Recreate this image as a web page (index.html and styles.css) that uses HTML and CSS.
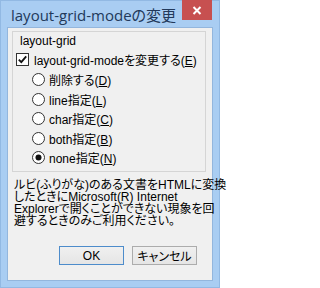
FILE: index.html
```html
<!DOCTYPE html>
<html lang="ja">
<head>
<meta charset="utf-8">
<link rel="stylesheet" href="styles.css">
</head>
<body>
<div class="window">
  <div class="titlebar">
    <div class="title">layout-grid-modeの変更</div>
    <div class="close">
      <svg width="30" height="20" viewBox="0 0 30 20"><path d="M11.5 7 L18.5 14 M18.5 7 L11.5 14" stroke="#fff" stroke-width="2" fill="none"/></svg>
    </div>
  </div>
  <div class="client">
    <div class="group">
      <div class="legend">layout-grid</div>
      <label class="row check-row">
        <svg class="box" width="13" height="13" viewBox="0 0 13 13"><rect x="0.5" y="0.5" width="12" height="12" fill="#fff" stroke="#333"/><path d="M2.8 6.6 L5.3 9.2 L10.2 3.4" stroke="#111" stroke-width="1.8" fill="none"/></svg>
        <span>layout-grid-modeを変更する(<u>E</u>)</span>
      </label>
      <div class="radios">
        <label class="row radio-row">
          <svg class="box" width="13" height="13" viewBox="0 0 13 13"><circle cx="6.5" cy="6.5" r="6" fill="#fff" stroke="#333"/></svg>
          <span>削除する(<u>D</u>)</span>
        </label>
        <label class="row radio-row">
          <svg class="box" width="13" height="13" viewBox="0 0 13 13"><circle cx="6.5" cy="6.5" r="6" fill="#fff" stroke="#333"/></svg>
          <span>line指定(<u>L</u>)</span>
        </label>
        <label class="row radio-row">
          <svg class="box" width="13" height="13" viewBox="0 0 13 13"><circle cx="6.5" cy="6.5" r="6" fill="#fff" stroke="#333"/></svg>
          <span>char指定(<u>C</u>)</span>
        </label>
        <label class="row radio-row">
          <svg class="box" width="13" height="13" viewBox="0 0 13 13"><circle cx="6.5" cy="6.5" r="6" fill="#fff" stroke="#333"/></svg>
          <span>both指定(<u>B</u>)</span>
        </label>
        <label class="row radio-row">
          <svg class="box" width="13" height="13" viewBox="0 0 13 13"><circle cx="6.5" cy="6.5" r="6" fill="#fff" stroke="#333"/><circle cx="6.5" cy="6.5" r="3" fill="#111"/></svg>
          <span>none指定(<u>N</u>)</span>
        </label>
      </div>
    </div>
    <p class="note">ルビ(ふりがな)のある文書をHTMLに変換<br>したときにMicrosoft(R) Internet<br>Explorerで開くことができない現象を回<br>避するときのみご利用ください。</p>
    <div class="buttons">
      <button class="btn default">OK</button>
      <button class="btn">キャンセル</button>
    </div>
  </div>
</div>
</body>
</html>
```

FILE: styles.css
```css
html, body {
  margin: 0;
  padding: 0;
}

.window {
  width: 220px;
  height: 288px;
  box-sizing: border-box;
  background: #a9cdf2;
  box-shadow: inset 0 0 0 1px #92b9e3;
  display: flex;
  flex-direction: column;
  font-family: "Liberation Sans", "Noto Sans CJK JP", sans-serif;
  font-size: 12px;
  font-feature-settings: "palt" 1;
  color: #000;
}

.titlebar {
  height: 28px;
  display: flex;
  justify-content: space-between;
  align-items: flex-start;
  flex: none;
}

.title {
  font-family: "Open Sans", "Noto Sans CJK JP", sans-serif;
  font-size: 15px;
  line-height: 20px;
  padding: 5px 0 0 11px;
  color: #22395a;
  white-space: nowrap;
}

.close {
  width: 30px;
  height: 20px;
  margin-right: 8px;
  background: #c75050;
  display: flex;
}

.client {
  flex: 1;
  margin: 0 8px 8px;
  background: #f0f0f0;
  box-shadow: 0 0 0 1px #93b6dd;
  display: flex;
  flex-direction: column;
}

.group {
  margin: 3px 6px 0 4px;
  height: 141px;
  box-sizing: border-box;
  border: 1px solid #d5d5d5;
  padding-top: 2px;
}

.legend {
  height: 15px;
  line-height: 14px;
  padding-left: 7px;
}

.row {
  display: flex;
  align-items: center;
  white-space: nowrap;
}

.row .box {
  flex: none;
}

.check-row {
  height: 20px;
  padding-left: 3px;
}

.check-row .box {
  margin-right: 5px;
}

.radios {
  margin-top: 1px;
}

.radio-row {
  height: 19.5px;
  padding-left: 19px;
}

.radio-row .box {
  margin-right: 4px;
}

.note {
  margin: 7px 0 0 6px;
  line-height: 12px;
  white-space: nowrap;
}

.buttons {
  margin-top: 19px;
  display: flex;
  justify-content: flex-end;
  gap: 8px;
  padding-right: 15px;
}

.btn {
  width: 65px;
  height: 19px;
  box-sizing: border-box;
  padding: 0;
  border: 1px solid #acacac;
  background: linear-gradient(#f0f0f0, #e5e5e5);
  font: inherit;
  color: #000;
}

.btn.default {
  border-color: #4d8ccb;
}
```
